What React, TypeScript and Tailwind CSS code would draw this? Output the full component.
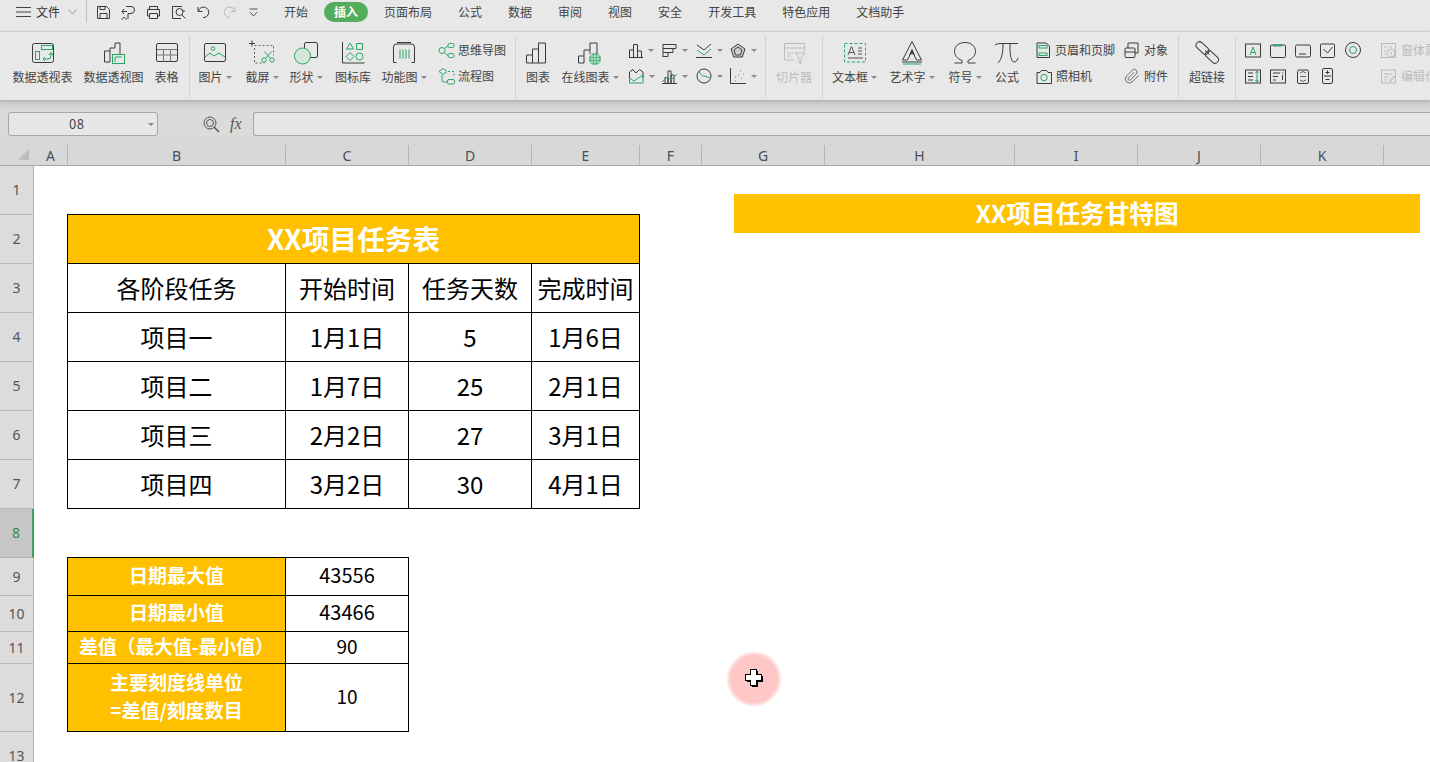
import type { ReactNode } from 'react';

const G = '#2ba664';
const D = '#3a3a3a';

function Ic({ w = 26, h = 26, children, className = '' }: { w?: number; h?: number; children: ReactNode; className?: string }) {
  return (
    <svg width={w} height={h} viewBox={`0 0 ${w} ${h}`} fill="none" stroke={D} strokeWidth="1" className={`shrink-0 ${className}`}>
      {children}
    </svg>
  );
}

function Caret() {
  return <span className="ml-[3px] inline-block h-0 w-0 border-x-[3px] border-t-[3px] border-x-transparent border-t-[#8a8a8a]" />;
}

function Big({ label, icon, caret, className = '', dim }: { label: string; icon: ReactNode; caret?: boolean; className?: string; dim?: boolean }) {
  return (
    <div className={`flex shrink-0 flex-col items-center pt-[8px] ${className}`}>
      <div className="h-[27px]">{icon}</div>
      <div className={`flex h-[20px] items-center whitespace-nowrap text-[12px] ${dim ? 'text-[#bcbcbc]' : 'text-[#444]'}`}>
        {label}
        {caret && <Caret />}
      </div>
    </div>
  );
}

function Small({ icon, label, className = 'gap-[5px]' }: { icon: ReactNode; label: string; className?: string }) {
  return (
    <div className={`flex h-[26px] items-center whitespace-nowrap text-[12px] text-[#444] ${className}`}>
      {icon}
      <span>{label}</span>
    </div>
  );
}

function Sep() {
  return <div className="mt-[4px] h-[62px] w-px shrink-0 bg-[#d2d2d2]" />;
}

function Mini({ icon }: { icon: ReactNode }) {
  return (
    <div className="flex h-[26px] w-[34px] items-center">
      {icon}
      <span className="ml-[5px] inline-block h-0 w-0 border-x-[3px] border-t-[3px] border-x-transparent border-t-[#8a8a8a]" />
    </div>
  );
}

const tabs = ['开始', '插入', '页面布局', '公式', '数据', '审阅', '视图', '安全', '开发工具', '特色应用', '文档助手'];

const columns = [
  { n: 'A', c: 'w-[34px]' },
  { n: 'B', c: 'w-[218px]' },
  { n: 'C', c: 'w-[123px]' },
  { n: 'D', c: 'w-[123px]' },
  { n: 'E', c: 'w-[108px]' },
  { n: 'F', c: 'w-[62px]' },
  { n: 'G', c: 'w-[123px]' },
  { n: 'H', c: 'w-[190px]' },
  { n: 'I', c: 'w-[123px]' },
  { n: 'J', c: 'w-[123px]' },
  { n: 'K', c: 'w-[123px]' },
  { n: '', c: 'w-[60px]' },
];

const rows = [
  { n: 1, c: 'h-[49px]' },
  { n: 2, c: 'h-[49px]' },
  { n: 3, c: 'h-[49px]' },
  { n: 4, c: 'h-[49px]' },
  { n: 5, c: 'h-[49px]' },
  { n: 6, c: 'h-[49px]' },
  { n: 7, c: 'h-[49px]' },
  { n: 8, c: 'h-[49px]' },
  { n: 9, c: 'h-[38px]' },
  { n: 10, c: 'h-[36px]' },
  { n: 11, c: 'h-[32px]' },
  { n: 12, c: 'h-[68px]' },
  { n: 13, c: 'h-[49px]' },
];

const tasks = [
  ['项目一', '1月1日', '5', '1月6日'],
  ['项目二', '1月7日', '25', '2月1日'],
  ['项目三', '2月2日', '27', '3月1日'],
  ['项目四', '3月2日', '30', '4月1日'],
];

const cell = 'flex items-center justify-center border-r border-b border-black';

function TopBar() {
  return (
    <div className="flex h-[32px] items-start border-b border-[#d8d8d8] bg-[#e8e8e8] pl-[16px]">
      <div className="flex h-[24px] items-center">
        <svg width="15" height="10" viewBox="0 0 15 10" stroke="#444" strokeWidth="1"><path d="M0 .5h15M0 5h15M0 9.500h15" /></svg>
        <span className="ml-[5px] w-[24px] text-[12px] text-[#333]">文件</span>
        <svg className="ml-[8px]" width="9" height="6" viewBox="0 0 9 6" fill="none" stroke="#999"><path d="M.5.5 4.500 5 8.500.5" /></svg>
      </div>
      <div className="ml-[9px] h-[23px] w-px bg-[#bdbdbd]" />
      <div className="ml-[4px] flex h-[24px] items-center">
        <div className="flex w-[25px] justify-center">
          <Ic w={15} h={15}><path d="M1.500 1.500h9l3 3v9h-12z" /><path d="M4 13.500v-5h7v5M4 1.500v3h5v-3" /></Ic>
        </div>
        <div className="flex w-[25px] justify-center">
          <Ic w={15} h={15}><path d="M5 1.500h5a3 3 0 0 1 0 7H7v5.500M1 6.500h5M3 9 1 6.500 3 4M3 12.500a2 2 0 1 0 .1 0" /></Ic>
        </div>
        <div className="flex w-[25px] justify-center">
          <Ic w={15} h={15}><path d="M3.500 4V1.500h8V4M3.500 11H1.500V4.500h12V11h-2M3.500 8.500h8v5h-8z" /></Ic>
        </div>
        <div className="flex w-[25px] justify-center">
          <Ic w={16} h={15}><path d="M11 1.500H1.500v12H10M13 5v2" /><circle cx="8.500" cy="7" r="3.500" /><path d="m11 10 3.500 3.500" /></Ic>
        </div>
        <div className="flex w-[25px] justify-center">
          <Ic w={14} h={13}><path d="M1 1v4.500h4.500M1.500 5A5.200 5.200 0 1 1 6 11.500" /></Ic>
        </div>
        <div className="flex w-[25px] justify-center">
          <Ic w={14} h={13}><g stroke="#b8b8b8"><path d="M13 1v4.500H8.500M12.500 5A5.200 5.200 0 1 0 8 11.500" /></g></Ic>
        </div>
        <div className="flex w-[25px] justify-center">
          <Ic w={9} h={9}><path d="M.5 1h8M1 4l3.500 4L8 4" stroke="#555" /></Ic>
        </div>
      </div>
      <div className="ml-[5px] flex h-[24px] items-center text-[12px] text-[#444]">
        {tabs.map((t) =>
          t === '插入' ? (
            <span key={t} className="mx-[3px] flex h-[20px] items-center rounded-full bg-[#52ad5c] px-[10px] font-bold text-white">{t}</span>
          ) : (
            <span key={t} className="px-[13px]">{t}</span>
          ),
        )}
      </div>
    </div>
  );
}

function Ribbon() {
  return (
    <div className="relative z-10 flex h-[68px] overflow-hidden bg-[#e8e8e8] pl-[7px] shadow-[0_1px_4px_rgba(0,0,0,0.18)]">
      <Big className="w-[71px]" label="数据透视表" icon={<Ic><rect x="2.500" y="3.500" width="21" height="19" rx="2" /><g stroke={G}><rect x="11.500" y="5.500" width="11" height="4" /><rect x="5.500" y="11.500" width="4" height="8" /><path d="M13 19h5q3 0 3-3v-3M19 15l2-2.500 2 2.500M15 17l-2 2 2 2" /></g></Ic>} />
      <Big className="w-[71px]" label="数据透视图" icon={<Ic><path d="M9 22H3.500V11H9M9 22V8h5V3h5v11" /><rect x="11.500" y="14.500" width="12" height="9" stroke={G} /><path d="M14 22v-5h7" stroke={G} /></Ic>} />
      <Big className="w-[35px]" label="表格" icon={<Ic><rect x="2.500" y="3.500" width="21" height="18" rx="1.500" /><path d="M3 9.500h20M3 15h20M9.500 9.500v12M16.500 9.500v12" stroke="#777" /></Ic>} />
      <div className="ml-[5px]"><Sep /></div>
      <Big className="w-[50px]" caret label="图片" icon={<Ic><rect x="2.500" y="3.500" width="21" height="18" rx="1.500" /><circle cx="11" cy="8.500" r="1.800" stroke={G} /><path d="m3 17 5-4 4 3 5-3 6 4" stroke={G} /></Ic>} />
      <Big className="w-[44px]" caret label="截屏" icon={<Ic><path d="M5.500 5.500h19v10M5.500 8v15h10" stroke="#666" strokeDasharray="2 2" /><path d="M3 .5v6M0 3.500h6" /><g stroke={G}><circle cx="15" cy="20" r="2.200" /><circle cx="23" cy="20" r="2.200" /><path d="m16.500 18.500 6-7M21.500 18.500l-6-7" /></g></Ic>} />
      <Big className="w-[44px]" caret label="形状" icon={<Ic><rect x="11.500" y="2.500" width="13" height="15" rx="1.500" /><circle cx="9.500" cy="16" r="8" fill="#d6e6dc" stroke={G} /></Ic>} />
      <Big className="w-[50px]" label="图标库" icon={<Ic><path d="M2.500 2v21h22" /><g stroke={G}><path d="m10 3 3.500 6h-7zM16.500 3.500h6v6h-6zM10 12.500l4 4-4 4-4-4z" /><circle cx="19.500" cy="16.500" r="3.500" /></g></Ic>} />
      <Big className="w-[52px]" caret label="功能图" icon={<Ic><path d="M2.500 7q0-3 3-3h15q3 0 3 3v15.500M2.500 7v15.500h3M23.500 22.500h-3M6 2.500h14" /><path d="M9 9.500v9M12 9.500v9M15 9.500v9M18 9.500v9" stroke={G} /></Ic>} />
      <div className="flex w-[85px] shrink-0 flex-col pl-[8px] pt-[5px]">
        <Small label="思维导图" className="gap-[3px]" icon={<Ic w={17} h={17}><g stroke={G}><circle cx="4" cy="8.500" r="3" /><rect x="10" y="1.500" width="6" height="4" rx="1.500" /><rect x="10" y="11.500" width="6" height="4" rx="1.500" /><path d="M6.500 6.500 10 4M6.500 10.500l3.500 3" /></g></Ic>} />
        <Small label="流程图" className="gap-[3px]" icon={<Ic w={17} h={17}><g stroke={G}><path d="m5 .5 4 3-4 3-4-3z" /><rect x="9.500" y="11.500" width="7" height="4.500" rx="1.500" /><path d="M4 7v5q0 2 2 2h3" /><path d="M10 3.500h6v6" strokeDasharray="2 2" /></g></Ic>} />
      </div>
      <Sep />
      <Big className="w-[44px]" label="图表" icon={<Ic><path d="M1.500 23V15h6v8M7.500 23V9h6v14M13.500 23V3h7v20M1.500 23h19" /></Ic>} />
      <Big className="w-[60px]" caret label="在线图表" icon={<Ic><path d="M7 23H1.500v-7H7M7 23V10h6v4M13 10V3h7v12" /><circle cx="18" cy="19" r="6" fill="#2ba664" stroke="none" /><path d="M12 19h12M18 13v12M15 14v10M21 14v10M13 16h10M13 22h10" stroke="#dff0e5" strokeWidth=".8" /></Ic>} />
      <div className="flex w-[145px] shrink-0 flex-col pl-[8px] pt-[5px]">
        <div className="flex">
          <Mini icon={<Ic w={15} h={15}><path d="M1 14.500h14M1.500 14V7h4v7M5.500 14V1.500h4V14M9.500 14V8h4v6" /></Ic>} />
          <Mini icon={<Ic w={15} h={15}><path d="M1 1v13M1 1.500h13v4H1M1 5.500h10v4H1M1 9.500h5v4H1" /></Ic>} />
          <Mini icon={<Ic w={16} h={15}><path d="M0 14.500h16" /><path d="m1 2 7 5 7-6" /><path d="m1 7 7 5 7-6" stroke={G} /></Ic>} />
          <Mini icon={<Ic w={16} h={15}><path d="m8 1 7 5-2.700 8H3.700L1 6z" fill="#cfcfcf" /><path d="m8 4 4 3-1.500 5h-5L4 7z" /></Ic>} />
        </div>
        <div className="flex">
          <Mini icon={<Ic w={16} h={16}><path d="M1.500 15V4L5 1.500 8 5l3.500-3.500L15 4v6" /><path d="M1.500 10 6 13l9-6v8H1.500z" stroke={G} /></Ic>} />
          <Mini icon={<Ic w={15} h={15}><path d="M3 14.500v-6h3v6M6 14.500V2h3v12.500M9 14.500V6h3v8.500M0 14.500h15" /><path d="m0 13 5-5 4 3 6-6" stroke={G} /></Ic>} />
          <Mini icon={<Ic w={16} h={16}><circle cx="8" cy="8" r="7" /><path d="M3 3c1 3 3 5 5 5l7 2" stroke={G} /></Ic>} />
          <Mini icon={<Ic w={16} h={16}><path d="M.5 0v15.500H16" /><path d="M5 9h1M5 13h1M8 7h1M10 3h1M11 10h1M13 6h1" stroke={G} strokeDasharray="1 1" /></Ic>} />
        </div>
      </div>
      <Sep />
      <Big className="w-[56px]" dim label="切片器" icon={<Ic><g stroke="#bcbcbc"><path d="M13 20H3.500V3.500h20V12M3.500 8h20M6 13h6M6 16h4" /><path d="M14 13h10l-4 5v6l-2-1.500V18z" /></g></Ic>} />
      <Sep />
      <Big className="w-[63px]" caret label="文本框" icon={<Ic><rect x="2.500" y="3.500" width="21" height="18.500" stroke={G} strokeDasharray="3 2" /><path d="m6 15 3.500-8.500L13 15M7 12.500h5M16 8h4M16 11h4M16 14h4M6 18h15" stroke="#555" /></Ic>} />
      <Big className="w-[52px]" caret label="艺术字" icon={<Ic w={24}><path d="M12 1.500 2.500 20h5L12 11l4.500 9h5z" /><path d="m9.500 15.500 2.500-6 2.500 6M10 13.500h4" /><path d="M2 22h20" /><path d="M3 24h18" stroke={G} /></Ic>} />
      <Big className="w-[54px]" caret label="符号" icon={<Ic><path d="M2.500 23H10v-2.500C5 18.500 2.500 15 2.500 11.500 2.500 6 7 2.500 13 2.500S23.500 6 23.500 11.500c0 3.500-2.500 7-7.500 9V23h7.500" /></Ic>} />
      <Big className="w-[30px]" label="公式" icon={<Ic><path d="M1 5c3-1.500 4-1.500 7-1.500h16M9 4c0 8-1 15-5 19M16 4c0 7 0 17 4 18 2 0 3-1 4-4" /></Ic>} />
      <div className="ml-[14px] flex w-[88px] shrink-0 flex-col pt-[5px]">
        <Small label="页眉和页脚" icon={<Ic w={14} h={16}><path d="M1 1h9l3.500 3v11.500H1z" /><rect x="3" y="3.500" width="8" height="2.500" stroke={G} /><rect x="3" y="11" width="8" height="2.500" stroke={G} /></Ic>} />
        <Small label="照相机" className="gap-[4px]" icon={<Ic w={16} h={15}><path d="M1 3.500h3l1.500-2h5l1.500 2h3.500v11H1z" /><circle cx="8" cy="8.500" r="3.200" stroke={G} /></Ic>} />
      </div>
      <div className="flex w-[54px] shrink-0 flex-col pt-[5px]">
        <Small label="对象" icon={<Ic w={15} h={16}><path d="M4 6V1h10v10h-3" /><rect x="1" y="6" width="10" height="9.500" rx="1" /><path d="M1 10h10" /></Ic>} />
        <Small label="附件" icon={<Ic w={15} h={16}><g transform="scale(.68)" stroke="#666" strokeWidth="1.400"><path d="m21.440 11.050-9.190 9.190a6 6 0 0 1-8.490-8.490l8.570-8.570A4 4 0 1 1 18 8.840l-8.590 8.570a2 2 0 0 1-2.830-2.830l8.490-8.480" /></g></Ic>} />
      </div>
      <Sep />
      <Big className="w-[56px]" label="超链接" icon={<Ic>
        <rect x="-7.500" y="-3.500" width="15" height="7" rx="3.500" transform="translate(8.500 8) rotate(42)" />
        <rect x="-7.500" y="-3.500" width="15" height="7" rx="3.500" transform="translate(18 17) rotate(42)" />
        <path d="m11 10.500 4.500 4" />
      </Ic>} />
      <Sep />
      <div className="flex w-[129px] shrink-0 flex-col pl-[4px] pt-[5px]">
        <div className="flex">
          {[
            <Ic w={16} h={15} key="a"><rect x=".5" y="1" width="15" height="13" /><path d="m5 12 3-8 3 8M6 9.500h4" stroke={G} /></Ic>,
            <Ic w={16} h={15} key="b"><rect x=".5" y="2" width="15" height="12.500" rx="1" /><path d="M3 2.500h9" stroke={G} strokeWidth="2" /></Ic>,
            <Ic w={16} h={15} key="c"><rect x=".5" y="2" width="15" height="12" rx="1.500" /><path d="M4 11h7" /></Ic>,
            <Ic w={16} h={15} key="d"><rect x=".5" y="1" width="14" height="13.500" rx="1" /><path d="m3.500 6 4 4 5-6" /></Ic>,
            <Ic w={16} h={16} key="e"><circle cx="8" cy="8" r="7.500" /><circle cx="8" cy="8" r="3.500" stroke={G} /></Ic>,
          ].map((ic, i) => (
            <div key={i} className="flex h-[26px] w-[25px] items-center justify-center">{ic}</div>
          ))}
        </div>
        <div className="flex">
          {[
            <Ic w={16} h={15} key="f"><rect x=".5" y="1" width="15" height="13" /><path d="M3 4h5M3 7.500h5M3 11h5" /><path d="M12 2v11M10.500 4 12 2l1.500 2M10.500 11l1.500 2 1.500-2" stroke={G} /></Ic>,
            <Ic w={16} h={15} key="g"><rect x=".5" y="1" width="15" height="13" /><path d="M3 4h7M3 7.500h5M3 11h3" /><path d="M11.500 4h2" stroke={G} /><path d="M12.500 6v5" /></Ic>,
            <Ic w={12} h={15} key="h"><rect x=".5" y="1" width="11" height="13.500" rx="1.500" /><path d="M3 4 6 2.500 9 4M3 11l3 1.500L9 11M3 7.500h6" stroke="#666" /></Ic>,
            <Ic w={11} h={16} key="i"><rect x=".5" y=".5" width="10" height="15" rx="1.500" /><path d="M2 8h7M5.500 2.500v3.500M3.500 4.500h4M3.500 11.500h4" /></Ic>,
          ].map((ic, i) => (
            <div key={i} className="flex h-[26px] w-[25px] items-center justify-center">{ic}</div>
          ))}
        </div>
      </div>
      <div className="ml-[16px] flex shrink-0 flex-col pt-[5px] text-[#bcbcbc]">
        <div className="flex h-[26px] items-center gap-[5px] whitespace-nowrap text-[12px]">
          <Ic w={15} h={15}><g stroke="#bcbcbc"><rect x=".5" y=".5" width="14" height="14" /><circle cx="10" cy="10" r="4" fill="#e8e8e8" /><path d="M10 9v3M10 7.500v.5M3 4h2M8 4h3M3 8h2M3 11h2" /></g></Ic>
          <span>窗体属性</span>
        </div>
        <div className="flex h-[26px] items-center gap-[5px] whitespace-nowrap text-[12px]">
          <Ic w={15} h={15}><g stroke="#bcbcbc"><rect x=".5" y="1" width="14" height="13" /><path d="M3 5h9M3 8h4M3 11h3M8 12l5-5 1 1-5 5z" /></g></Ic>
          <span>编辑代码</span>
        </div>
      </div>
    </div>
  );
}

function FormulaBar() {
  return (
    <div className="flex h-[36px] items-start bg-[linear-gradient(#cbcbcb,#dbdbdb_12px)] pl-[8px] pt-[12px]">
      <div className="flex h-[24px] w-[150px] shrink-0 items-center rounded-[3px] border border-[#a6a6a6] bg-[#e7e7e7] pl-[60px] text-[13px] tracking-[0.5px] text-[#444]">
        08
        <span className="ml-[64px] inline-block h-0 w-0 border-x-[3px] border-t-[3px] border-x-transparent border-t-[#8a8a8a]" />
      </div>
      <div className="ml-[45px] flex h-[24px] items-center">
        <svg width="17" height="17" viewBox="0 0 17 17" fill="none" stroke="#555"><circle cx="7" cy="7" r="6" /><circle cx="7" cy="7" r="3.500" /><path d="m11 11 5 5" strokeWidth="1.500" /></svg>
        <span className="ml-[10px] font-['Liberation_Serif',serif] text-[16px] italic text-[#555]">fx</span>
      </div>
      <div className="ml-[11px] h-[24px] flex-1 rounded-l-[3px] border border-r-0 border-[#a6a6a6] bg-[#e7e7e7]" />
    </div>
  );
}

function ColumnHeader() {
  return (
    <div className="flex h-[30px] items-stretch border-b border-[#a8a8a8] bg-[#d8d8d8]">
      <div className="flex h-[29px] w-[34px] shrink-0 items-end justify-end pb-[5px] pr-[5px]">
        <div className="h-0 w-0 border-b-[11px] border-l-[11px] border-b-[#bdbdbd] border-l-transparent" />
      </div>
      {columns.map((c) => (
        <div key={c.n + c.c} className={`mt-[9px] flex shrink-0 items-center justify-center border-r border-[#b4b4b4] font-['Noto_Sans',sans-serif] text-[14px] text-[#46505a] ${c.c}`}>
          {c.n}
        </div>
      ))}
    </div>
  );
}

function RowHeader() {
  return (
    <div className="w-[34px] shrink-0">
      {rows.map((r) => (
        <div
          key={r.n}
          className={`flex items-center justify-center border-b pb-[1px] font-['Noto_Sans',sans-serif] text-[14px] ${r.c} ${
            r.n === 8 ? 'border-r-2 border-b-[#b0b0b0] border-r-[#3fa35a] bg-[#c6c6c6] text-[#2f8f4a]' : 'border-r border-b-[#b8b8b8] border-r-[#b4b4b4] bg-[#dcdcdc] text-[#555]'
          }`}
        >
          {r.n}
        </div>
      ))}
    </div>
  );
}

function Sheet() {
  return (
    <div className="relative flex flex-1 overflow-hidden bg-white">
      <RowHeader />
      <div className="pl-[33px] pt-[48px] text-black">
        <div className="grid w-[573px] grid-cols-[218px_123px_123px_108px] grid-rows-[repeat(6,49px)] border-l border-t border-black text-[24px]">
          <div className={`${cell} col-span-4 bg-[#ffc000] text-[27.7px] font-bold text-white`}>XX项目任务表</div>
          <div className={cell}>各阶段任务</div>
          <div className={cell}>开始时间</div>
          <div className={cell}>任务天数</div>
          <div className={cell}>完成时间</div>
          {tasks.flat().map((t, i) => (
            <div key={i} className={`${cell} pb-[1px]`}>{t}</div>
          ))}
        </div>
        <div className="mt-[48px] grid w-[342px] grid-cols-[218px_123px] grid-rows-[38px_36px_32px_68px] border-l border-t border-black text-[19px]">
          <div className={`${cell} bg-[#ffc000] pb-[3px] font-bold text-white`}>日期最大值</div>
          <div className={`${cell} pb-[3px] text-[20px]`}>43556</div>
          <div className={`${cell} bg-[#ffc000] pb-[3px] font-bold text-white`}>日期最小值</div>
          <div className={`${cell} pb-[3px] text-[20px]`}>43466</div>
          <div className={`${cell} whitespace-nowrap bg-[#ffc000] pb-[3px] text-[18.8px] font-bold text-white`}>差值（最大值-最小值）</div>
          <div className={`${cell} pb-[3px]`}>90</div>
          <div className={`${cell} bg-[#ffc000] pb-[3px] text-center font-bold leading-[28px] text-white`}>
            主要刻度线单位
            <br />
            =差值/刻度数目
          </div>
          <div className={`${cell} pb-[3px]`}>10</div>
        </div>
      </div>

      {/* floating title of the chart area */}
      <div className="absolute left-[734px] top-[28px] flex h-[39px] w-[686px] items-center justify-center bg-[#ffc000] pb-[2px] text-[24.6px] font-bold text-white">
        XX项目任务甘特图
      </div>

      {/* recording cursor */}
      <div className="absolute left-[726px] top-[485px] flex h-[56px] w-[56px] items-center justify-center rounded-full bg-[radial-gradient(closest-side,#ffc6c6_0%,#ffc6c6_82%,#ffdfdf_92%,transparent_100%)]">
        <svg width="20" height="20" viewBox="0 0 20 20" shapeRendering="crispEdges">
          <path d="M8 2h6v5h5v6h-5v5H8v-5H3V7h5z" fill="#000" />
          <path d="M6.500.5h6v5h5v6h-5v5h-6v-5h-5v-6h5z" fill="#fff" stroke="#000" />
        </svg>
      </div>
    </div>
  );
}

export default function App() {
  return (
    <div className="flex h-[762px] w-[1430px] flex-col overflow-hidden bg-white font-['Noto_Sans_CJK_SC','Noto_Sans',sans-serif]">
      <TopBar />
      <Ribbon />
      <FormulaBar />
      <ColumnHeader />
      <Sheet />
    </div>
  );
}
